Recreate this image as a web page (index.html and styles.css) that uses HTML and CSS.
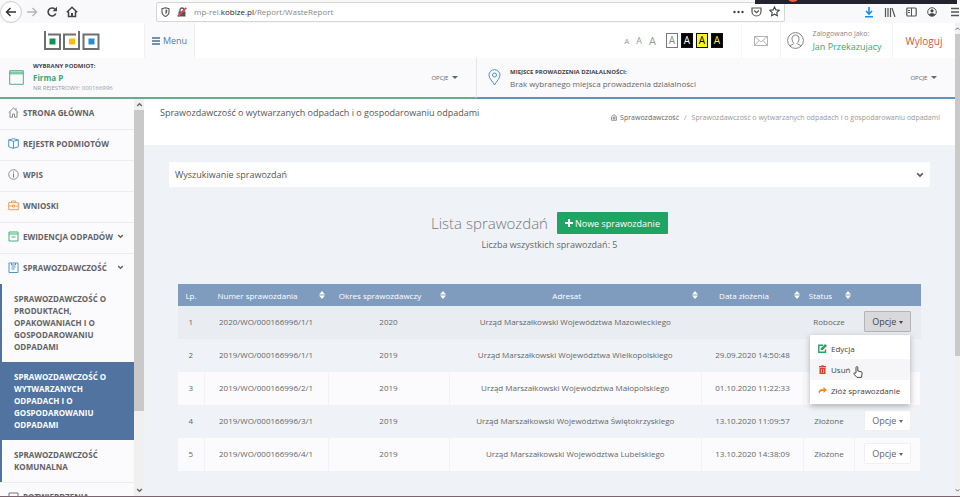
FILE: index.html
```html
<!DOCTYPE html>
<html lang="pl">
<head>
    <meta charset="UTF-8">
    <meta name="viewport" content="width=device-width, initial-scale=1.0">
    <title>Sprawozdawczość</title>
    <link rel="stylesheet" href="styles.css">
</head>
<body>

    <!-- Ikony używane wielokrotnie -->
    <svg class="sprite" aria-hidden="true">
        <symbol id="chevron" viewBox="0 0 8 6"><path d="M1.2 1.2 4 4l2.800-2.800" fill="none" stroke="currentColor" stroke-width="1.600"/></symbol>
        <symbol id="sort" viewBox="0 0 6 8"><path d="M3 0 6 3.400H0zM3 8 0 4.600h6z" fill="currentColor"/></symbol>
    </svg>

    <!-- Pasek przeglądarki -->
    <div class="browser">
        <button class="nav-btn nav-back" aria-label="Wstecz">
            <svg width="12" height="12" viewBox="0 0 12 12"><path d="M11 6H2M5.500 2 1.500 6l4 4" fill="none" stroke="#333" stroke-width="1.500"/></svg>
        </button>
        <button class="nav-btn" aria-label="Dalej">
            <svg width="12" height="12" viewBox="0 0 12 12"><path d="M1 6h9M6.500 2l4 4-4 4" fill="none" stroke="#b5b5b8" stroke-width="1.400"/></svg>
        </button>
        <button class="nav-btn" aria-label="Odśwież">
            <svg width="12" height="12" viewBox="0 0 12 12"><path d="M9.800 7.500A4 4 0 1 1 9 3.200" fill="none" stroke="#444" stroke-width="1.600"/><path d="M11 .8v4.400H6.600z" fill="#444"/></svg>
        </button>
        <button class="nav-btn" aria-label="Strona startowa">
            <svg width="12" height="12" viewBox="0 0 12 12"><path d="M.8 6.200 6 1.300l5.200 4.900M2.500 5.500v5h7v-5" fill="none" stroke="#444" stroke-width="1.500"/><path d="M5 7h2v3.500H5z" fill="#444"/></svg>
        </button>
        <div class="address">
            <svg width="9" height="10" viewBox="0 0 9 10"><path d="M4.500.7 8 1.700v3c0 2.300-1.500 3.800-3.500 4.700C2.500 8.500 1 7 1 4.700v-3z" fill="none" stroke="#555" stroke-width="1.100"/><path d="M4.500 2.500v4.800c1-.6 1.700-1.600 1.700-2.800V3z" fill="#555"/></svg>
            <svg width="10" height="10" viewBox="0 0 10 10"><path d="M3 5V3a2 2 0 0 1 4 0v2" fill="none" stroke="#555" stroke-width="1.300"/><path d="M1.500 4.500h7v5h-7z" fill="#555"/><path d="M.8 9.500 9.200.8" stroke="#e0435a" stroke-width="1.800"/></svg>
            <span class="url">mp-rel.<b>kobize.pl</b>/Report/WasteReport</span>
            <svg width="11" height="4" viewBox="0 0 11 4"><g fill="#444"><circle cx="1.500" cy="2" r="1.200"/><circle cx="5.500" cy="2" r="1.200"/><circle cx="9.500" cy="2" r="1.200"/></g></svg>
            <svg width="11" height="10" viewBox="0 0 11 10"><path d="M1 1h9v3.500a4.500 4.500 0 0 1-9 0zM3.200 3.500l2.300 2.200 2.300-2.200" fill="none" stroke="#555" stroke-width="1.200"/></svg>
            <svg width="11" height="11" viewBox="0 0 11 11"><path d="m5.500.9 1.400 3 3.300.4-2.400 2.200.6 3.300-2.900-1.600-2.900 1.600.6-3.300L.8 4.300l3.300-.4z" fill="none" stroke="#444" stroke-width="1.100"/></svg>
        </div>
        <div class="toolbar">
            <svg width="10" height="12" viewBox="0 0 10 12"><path d="M5 1v7M2 5l3 3 3-3M1 10.800h8" fill="none" stroke="#1a8cf0" stroke-width="1.600"/></svg>
            <svg width="12" height="12" viewBox="0 0 12 12"><path d="M1.500 2v9M4 2v9M6.500 2v9M8 2l3 9" fill="none" stroke="#555" stroke-width="1.200"/></svg>
            <svg width="11" height="12" viewBox="0 0 11 12"><rect x=".8" y="2" width="9.400" height="8" rx="1" fill="none" stroke="#555" stroke-width="1.200"/><path d="M5.500 2v8M2 4.500h2M2 6.500h2" stroke="#555"/></svg>
            <svg width="10" height="12" viewBox="0 0 10 12"><circle cx="5" cy="6" r="4.300" fill="none" stroke="#555"/><circle cx="5" cy="4.800" r="1.600" fill="#444"/><path d="M2 8.500c1-1.800 5-1.800 6 0-1.500 2-4.500 2-6 0z" fill="#444"/></svg>
            <svg class="burger" width="9" height="12" viewBox="0 0 9 12"><path d="M0 2.500h8M0 6h8M0 9.500h8" stroke="#555" stroke-width="1.300"/></svg>
        </div>
        <div class="window-strip"><i></i></div>
    </div>

    <div class="page">
        <div class="app">

            <header class="topbar">
                <a class="logo" href="#" aria-label="BDO">
                    <svg width="58" height="21" viewBox="0 0 58 21">
                        <g fill="none" stroke="#6f6f6f" stroke-width="2">
                            <path d="M2 1v18h15V4.500H5M36 1v18H21V4.500h12M40.500 4.500h15V19h-15z"/>
                        </g>
                        <path d="M6.500 8.500h6v6h-6z" fill="#0e9254"/>
                        <path d="M26 8.500h6v6h-6z" fill="#fbbe08"/>
                        <path d="M45.500 8.500h6v6h-6z" fill="#1d8fd6"/>
                    </svg>
                </a>
                <button class="menu-btn">
                    <svg width="8" height="8" viewBox="0 0 8 8"><path d="M0 1h8M0 4h8M0 7h8" stroke="#4a6f99" stroke-width="1.400"/></svg>
                    Menu
                </button>
                <div class="font-sizes">
                    <button class="fs-s">A</button>
                    <button class="fs-m">A</button>
                    <button class="fs-l">A</button>
                </div>
                <div class="contrast">
                    <button class="c-default">A</button>
                    <button class="c-black">A</button>
                    <button class="c-yellow">A</button>
                    <button class="c-inverse">A</button>
                </div>
                <a class="mail" href="#" aria-label="Wiadomości">
                    <svg width="14" height="10" viewBox="0 0 14 10"><path d="M.5.5h13v9H.5zM.5.5 7 6 13.500.5M.5 9.500 5 4.500M13.500 9.500 9 4.500" fill="none" stroke="#a0a0a0" stroke-width=".8"/></svg>
                </a>
                <div class="user">
                    <svg width="17" height="17" viewBox="0 0 17 17"><g fill="none" stroke="#777" stroke-width=".9"><circle cx="8.500" cy="8.500" r="7.900"/><path d="M3 14c.5-1.500 3.500-1.200 4-2.600C5.500 10 5 8.300 5 6.500c0-4.600 7-4.600 7 0 0 1.800-.5 3.500-2 4.900.5 1.400 3.500 1.100 4 2.600"/></g></svg>
                    <div>
                        <span class="user-label">Zalogowano jako:</span>
                        <a class="user-name" href="#">Jan Przekazujacy</a>
                    </div>
                </div>
                <a class="logout" href="#">Wyloguj</a>
            </header>

            <div class="context">
                <section class="context-box context-company">
                    <svg width="15" height="15" viewBox="0 0 15 15"><path d="M.7.700h13.600v13.600H.7zM.7 3.800h13.600M.7 2.200h13.600" fill="none" stroke="#4cb184"/></svg>
                    <div class="context-text">
                        <span class="context-label">WYBRANY PODMIOT:</span>
                        <strong>Firma P</strong>
                        <small>NR REJESTROWY: 000166996</small>
                    </div>
                    <button class="context-opt">OPCJE <i class="caret"></i></button>
                </section>
                <section class="context-box context-place">
                    <svg width="13" height="17" viewBox="0 0 13 17"><path d="M6.500 16C4.500 12 1 9.500 1 6.200a5.500 5.500 0 0 1 11 0C12 9.500 8.500 12 6.500 16z" fill="none" stroke="#4b93c0"/><circle cx="6.500" cy="6" r="2" fill="none" stroke="#4b93c0"/></svg>
                    <div class="context-text">
                        <span class="context-label">MIEJSCE PROWADZENIA DZIAŁALNOŚCI:</span>
                        <span class="context-value">Brak wybranego miejsca prowadzenia działalności</span>
                    </div>
                    <button class="context-opt">OPCJE <i class="caret"></i></button>
                </section>
            </div>

            <div class="layout">
                <nav class="sidebar">
                    <ul class="nav">
                        <li><a href="#">
                            <svg width="11" height="11" viewBox="0 0 11 11"><path d="M.8 5.500 5.500 1l4.700 4.500M2 4.800v5.400h2.500V7h2v3.200H9V4.800M8 3V1.200" fill="none" stroke="#888"/></svg>
                            STRONA GŁÓWNA</a></li>
                        <li><a href="#">
                            <svg width="11" height="11" viewBox="0 0 11 11"><path d="M5.500 10.300.7 8.800V1.900L5.500.7l4.800 1.200v6.900zM5.500 10.300V3.300M.7 1.900l4.800 1.400 4.800-1.400" fill="none" stroke="#4d97ca"/></svg>
                            REJESTR PODMIOTÓW</a></li>
                        <li><a href="#">
                            <svg width="11" height="11" viewBox="0 0 11 11"><circle cx="5.500" cy="5.500" r="4.800" fill="none" stroke="#888" stroke-width=".9"/><path d="M5.500 2.500v1M5.500 4.500v4" stroke="#777"/></svg>
                            WPIS</a></li>
                        <li><a href="#">
                            <svg width="11" height="11" viewBox="0 0 11 11"><path d="M.7 2.700h9.600v7H.7zM3.500 2.700V1h4v1.700M.7 6h3.800M6.500 6h3.800M4.500 5h2v2h-2z" fill="none" stroke="#eda050"/></svg>
                            WNIOSKI</a></li>
                        <li><a href="#">
                            <svg width="11" height="11" viewBox="0 0 11 11"><path d="M1 1h9v9H1zM1 3h9M3.500 6h4" fill="none" stroke="#3fb37c"/></svg>
                            EWIDENCJA ODPADÓW
                            <svg class="arrow" width="7" height="5"><use href="#chevron"/></svg></a></li>
                        <li><a href="#">
                            <svg width="11" height="11" viewBox="0 0 11 11"><path d="M1 1h9v9.500H1zM3.500 1v2h4V1M3.500 5h4M3.500 7h3" fill="none" stroke="#4d97ca"/></svg>
                            SPRAWOZDAWCZOŚĆ
                            <svg class="arrow" width="7" height="5"><use href="#chevron"/></svg></a>
                            <ul class="subnav">
                                <li><a href="#">SPRAWOZDAWCZOŚĆ O PRODUKTACH, OPAKOWANIACH I O GOSPODAROWANIU ODPADAMI</a></li>
                                <li><a class="active" href="#">SPRAWOZDAWCZOŚĆ O WYTWARZANYCH ODPADACH I O GOSPODAROWANIU ODPADAMI</a></li>
                                <li><a href="#">SPRAWOZDAWCZOŚĆ KOMUNALNA</a></li>
                            </ul>
                        </li>
                        <li><a href="#">
                            <svg width="11" height="11" viewBox="0 0 11 11"><path d="M1 2h9v8H1z" fill="none" stroke="#777"/></svg>
                            POTWIERDZENIA</a></li>
                    </ul>
                </nav>
                <div class="scroll side-scroll">
                    <svg width="7" height="5" class="up"><use href="#chevron"/></svg>
                    <i class="thumb"></i>
                    <svg width="7" height="5"><use href="#chevron"/></svg>
                </div>

                <main class="content">
                    <div class="content-head">
                        <h1>Sprawozdawczość o wytwarzanych odpadach i o gospodarowaniu odpadami</h1>
                        <nav class="crumbs">
                            <svg width="6" height="7" viewBox="0 0 6 7"><path d="M.6 2.500 3 .6l2.400 1.900v3.800H.6zM2.300 3v2h1.600V3z" fill="none" stroke="#777" stroke-width=".8"/></svg>
                            <a href="#">Sprawozdawczość</a>
                            <span class="sep">/</span>
                            <span>Sprawozdawczość o wytwarzanych odpadach i o gospodarowaniu odpadami</span>
                        </nav>
                    </div>

                    <div class="content-body">
                        <button class="search-panel">
                            Wyszukiwanie sprawozdań
                            <svg width="8" height="6"><use href="#chevron"/></svg>
                        </button>

                        <div class="list-head">
                            <h2>Lista sprawozdań</h2>
                            <button class="btn-new">
                                <svg width="8" height="8" viewBox="0 0 8 8"><path d="M4 0v8M0 4h8" stroke="#fff" stroke-width="2"/></svg>
                                Nowe sprawozdanie
                            </button>
                        </div>
                        <p class="list-count">Liczba wszystkich sprawozdań: 5</p>

                        <div class="table-wrap">
                            <table>
                                <colgroup>
                                    <col class="col-lp"><col class="col-num"><col class="col-okres"><col><col class="col-data"><col class="col-status"><col class="col-opt">
                                </colgroup>
                                <thead>
                                    <tr>
                                        <th>Lp.</th>
                                        <th class="sortable"><div>Numer sprawozdania<svg width="6" height="8"><use href="#sort"/></svg></div></th>
                                        <th class="sortable"><div>Okres sprawozdawczy<svg width="6" height="8"><use href="#sort"/></svg></div></th>
                                        <th class="sortable"><div>Adresat<svg width="6" height="8"><use href="#sort"/></svg></div></th>
                                        <th class="sortable"><div>Data złożenia<svg width="6" height="8"><use href="#sort"/></svg></div></th>
                                        <th class="sortable"><div>Status<svg width="6" height="8"><use href="#sort"/></svg></div></th>
                                        <th></th>
                                    </tr>
                                </thead>
                                <tbody>
                                    <tr class="current">
                                        <td>1</td>
                                        <td>2020/WO/000166996/1/1</td>
                                        <td>2020</td>
                                        <td>Urząd Marszałkowski Województwa Mazowieckiego</td>
                                        <td></td>
                                        <td>Robocze</td>
                                        <td>
                                            <div class="dropdown">
                                                <button class="btn-opt open">Opcje <i class="caret"></i></button>
                                                <div class="dropdown-menu">
                                                    <a href="#">
                                                        <svg width="9" height="9" viewBox="0 0 9 9"><path d="M5 1.200H.8v7h6.700V5.500" fill="none" stroke="#1fa463" stroke-width="1.400"/><path d="M7.200 0 9 1.800 4.800 6 2.700 6.300 3 4.200z" fill="#1fa463"/></svg>
                                                        Edycja</a>
                                                    <a class="hover" href="#">
                                                        <svg width="9" height="9" viewBox="0 0 9 9"><path d="M1 1h2.300V.2h2.400V1H8v1.200H1zM1.500 2.800h6V9h-6z" fill="#d2452f"/><path d="M3.500 4v4M5.500 4v4" stroke="#f1c0b8" stroke-width=".7"/></svg>
                                                        Usuń</a>
                                                    <a href="#">
                                                        <svg width="9" height="9" viewBox="0 0 9 9"><path d="M5.500 1 9 4 5.500 7V5C3 4.800 1.500 5.500 1.200 8.200-.5 5 1.500 3 5.500 3z" fill="#f08a1c"/></svg>
                                                        Złóż sprawozdanie</a>
                                                </div>
                                                <svg class="cursor" width="10" height="12" viewBox="0 0 10 12"><path d="M3 7V1.500a.9.900 0 0 1 1.800 0V5l3.300.7c.8.200 1.100.7 1 1.500l-.6 4.200H4L1 8.200c-.6-.9.400-1.600 1-1z" fill="#fff" stroke="#333" stroke-width=".9"/></svg>
                                            </div>
                                        </td>
                                    </tr>
                                    <tr>
                                        <td>2</td>
                                        <td>2019/WO/000166996/1/1</td>
                                        <td>2019</td>
                                        <td>Urząd Marszałkowski Województwa Wielkopolskiego</td>
                                        <td>29.09.2020 14:50:48</td>
                                        <td></td>
                                        <td></td>
                                    </tr>
                                    <tr>
                                        <td>3</td>
                                        <td>2019/WO/000166996/2/1</td>
                                        <td>2019</td>
                                        <td>Urząd Marszałkowski Województwa Małopolskiego</td>
                                        <td>01.10.2020 11:22:33</td>
                                        <td></td>
                                        <td></td>
                                    </tr>
                                    <tr>
                                        <td>4</td>
                                        <td>2019/WO/000166996/3/1</td>
                                        <td>2019</td>
                                        <td>Urząd Marszałkowski Województwa Świętokrzyskiego</td>
                                        <td>13.10.2020 11:09:57</td>
                                        <td>Złożone</td>
                                        <td><button class="btn-opt">Opcje <i class="caret"></i></button></td>
                                    </tr>
                                    <tr>
                                        <td>5</td>
                                        <td>2019/WO/000166996/4/1</td>
                                        <td>2019</td>
                                        <td>Urząd Marszałkowski Województwa Lubelskiego</td>
                                        <td>13.10.2020 14:38:09</td>
                                        <td>Złożone</td>
                                        <td><button class="btn-opt">Opcje <i class="caret"></i></button></td>
                                    </tr>
                                </tbody>
                            </table>
                        </div>
                    </div>
                </main>
            </div>
        </div>
        <div class="scroll page-scroll">
            <svg width="5" height="5" class="up"><use href="#chevron"/></svg>
            <i class="thumb"></i>
            <svg width="5" height="5"><use href="#chevron"/></svg>
        </div>
    </div>

</body>
</html>
```

FILE: styles.css
```css
* {
    margin: 0;
    padding: 0;
    box-sizing: border-box;
}

body {
    font-family: "Open Sans", sans-serif;
    font-size: 9px;
    color: #666;
    height: 100vh;
    display: flex;
    flex-direction: column;
    overflow: hidden;
    background-color: #fff;
    border-bottom: 1px solid #7b6470;
}

button {
    font: inherit;
    color: inherit;
    background: none;
    border: 0;
}

a {
    color: inherit;
    text-decoration: none;
}

ul {
    list-style: none;
}

svg {
    flex: none;
}

.sprite {
    position: absolute;
    width: 0;
    height: 0;
}

.caret {
    display: inline-block;
    border: 3px solid transparent;
    border-top-color: currentColor;
    border-bottom: 0;
    vertical-align: middle;
}

/* Pasek przeglądarki */
.browser {
    position: relative;
    display: flex;
    align-items: center;
    height: 23px;
    flex: none;
    background-color: #f9f9fb;
}

.nav-btn {
    width: 20px;
    height: 22px;
    display: flex;
    align-items: center;
    justify-content: center;
}

.nav-back {
    width: 22px;
    border: 1px solid #ccc;
    border-radius: 50%;
    background-color: #fff;
}

.address {
    flex: 1;
    display: flex;
    align-items: center;
    gap: 7px;
    height: 20px;
    margin-left: 74px;
    padding: 0 4px;
    background-color: #fff;
    border: 1px solid #d5d5d8;
    border-radius: 2px;
}

.url {
    flex: 1;
    font-size: 8px;
    color: #888;
}

.url b {
    font-weight: 400;
    color: #222;
}

.toolbar {
    display: flex;
    align-items: center;
    gap: 10px;
    margin-left: 79px;
}

.burger {
    margin-left: 4px;
}

.window-strip {
    position: absolute;
    top: 0;
    right: 3px;
    width: 202px;
    height: 4px;
    overflow: hidden;
    background-color: #23232f;
}

.window-strip i {
    display: block;
    width: 12px;
    height: 12px;
    margin: -10px 0 0 32px;
    border-radius: 50%;
    background-color: #f0603a;
}

/* Układ strony */
.page {
    flex: 1;
    display: flex;
    min-height: 0;
}

.app {
    flex: 1;
    display: flex;
    flex-direction: column;
    min-width: 0;
}

.scroll {
    display: flex;
    flex-direction: column;
    align-items: center;
    flex: none;
    padding: 3px 0;
    background-color: #f0f0f1;
    color: #666;
}

.scroll .up {
    transform: rotate(180deg);
}

.scroll .thumb {
    width: 100%;
    margin: 3px 0 auto;
    background-color: #c9c9ca;
}

.side-scroll {
    width: 10px;
}

.side-scroll .thumb {
    height: 77%;
}

.page-scroll {
    width: 5px;
}

.page-scroll .thumb {
    height: 69%;
}

/* Górna belka */
.topbar {
    display: flex;
    height: 35px;
    flex: none;
    background-color: #fff;
}

.topbar > * {
    display: flex;
    align-items: center;
    justify-content: center;
}

.logo {
    width: 144px;
}

.menu-btn {
    width: 51px;
    gap: 3px;
    font-size: 9px;
    color: #587a9f;
    background-color: #fafafd;
    border-left: 1px solid #f0f0f3;
    border-right: 1px solid #f0f0f3;
}

.font-sizes {
    gap: 7px;
    margin-left: auto;
    color: #999;
}

.fs-s {
    font-size: 8px;
}

.fs-m {
    font-size: 9px;
}

.fs-l {
    font-size: 11px;
}

.contrast {
    gap: 3px;
    padding: 0 18px 0 10px;
}

.contrast button {
    width: 12px;
    height: 15px;
    font-size: 10px;
    line-height: 13px;
    border: 1px solid #111;
}

.contrast .c-default {
    color: #888;
    border-color: #777;
}

.c-black {
    color: #fff;
    background-color: #000;
}

.c-yellow {
    color: #000;
    background-color: #fdf41b;
}

.c-inverse {
    color: #fdf41b;
    background-color: #000;
}

.mail {
    width: 39px;
    border-left: 1px solid #f5f5f7;
}

.user {
    width: 113px;
    gap: 8px;
    padding-right: 4px;
    border-left: 1px solid #f2f2f4;
    border-right: 1px solid #f2f2f4;
}

.user-label {
    display: block;
    font-size: 7px;
    line-height: 12px;
    color: #888;
}

.user-name {
    display: block;
    font-size: 9px;
    line-height: 13px;
    color: #3aa670;
}

.logout {
    width: 62px;
    font-size: 10px;
    color: #c95a45;
}

/* Wybrany podmiot i miejsce */
.context {
    display: flex;
    height: 41px;
    flex: none;
    background-color: #fafafc;
}

.context-box {
    flex: 1;
    display: flex;
    align-items: center;
    gap: 9px;
    border-bottom: 2px solid #62ae8e;
}

.context-company {
    padding: 0 18px 0 9px;
}

.context-place {
    padding: 0 18px 0 11px;
    border-left: 1px solid #e6e6ea;
    border-bottom-color: #5a96bd;
}

.context-text {
    flex: 1;
}

.context-text > * {
    display: block;
    line-height: 11px;
}

.context-label {
    font-size: 6px;
    font-weight: 700;
    color: #444;
}

.context-text strong {
    font-size: 8px;
    color: #3aa670;
}

.context-text small {
    font-size: 6px;
    color: #999;
}

.context-value {
    font-size: 8px;
}

.context-opt {
    font-size: 6px;
}

.context-opt .caret {
    margin-left: 2px;
}

/* Menu boczne */
.layout {
    flex: 1;
    display: flex;
    min-height: 0;
}

.sidebar {
    width: 134px;
    flex: none;
    overflow: hidden;
    background-color: #fbfbfd;
    font-size: 8px;
    font-weight: 700;
    color: #626266;
}

.nav > li {
    border-bottom: 1px solid #ececef;
}

.nav > li > a {
    display: flex;
    align-items: center;
    gap: 4px;
    height: 30px;
    padding: 0 10px 3px 8px;
    white-space: nowrap;
}

.arrow {
    margin-left: auto;
}

.subnav {
    border-left: 2px solid #50739f;
}

.subnav a {
    display: block;
    padding: 9px 20px 9px 12px;
    line-height: 12px;
}

.subnav .active {
    color: #fff;
    background-color: #50739f;
}

/* Treść */
.content {
    flex: 1;
    min-width: 0;
    background-color: #eff3f7;
}

.content-head {
    display: flex;
    justify-content: space-between;
    height: 46px;
    padding: 6px 15px 0 16px;
    background-color: #fff;
}

.content-head h1 {
    font-size: 9px;
    font-weight: 400;
    line-height: 15px;
    color: #555;
}

.crumbs {
    display: flex;
    align-items: center;
    gap: 3px;
    height: 24px;
    font-size: 7px;
    color: #999;
}

.crumbs a {
    color: #666;
}

.sep {
    margin: 0 2px;
}

.content-body {
    padding: 17px 25px 0;
}

.search-panel {
    display: flex;
    align-items: center;
    justify-content: space-between;
    width: 100%;
    height: 25px;
    padding: 0 6px;
    color: #555;
    background-color: #fff;
}

.list-head {
    display: flex;
    align-items: center;
    justify-content: center;
    gap: 9px;
    margin-top: 25px;
}

.list-head h2 {
    font-size: 15px;
    font-weight: 300;
    line-height: 22px;
    color: #777;
}

.btn-new {
    display: flex;
    align-items: center;
    justify-content: center;
    gap: 2px;
    height: 22px;
    padding: 0 8px;
    color: #fff;
    background-color: #1fa463;
    border-radius: 1px;
}

.list-count {
    margin-top: 4px;
    line-height: 14px;
    text-align: center;
}

/* Tabela sprawozdań */
.table-wrap {
    margin-top: 32px;
    padding: 0 9px;
}

table {
    width: 100%;
    table-layout: fixed;
    border-collapse: collapse;
    font-size: 8px;
    text-align: center;
}

.col-lp {
    width: 26px;
}

.col-num {
    width: 124px;
}

.col-okres {
    width: 121px;
}

.col-data {
    width: 102px;
}

.col-status {
    width: 51px;
}

.col-opt {
    width: 66px;
}

th {
    height: 22px;
    font-weight: 400;
    color: #fff;
    background-color: #7f9cbf;
}

.sortable div {
    display: flex;
    align-items: center;
    justify-content: space-between;
    padding-right: 3px;
}

.sortable div::before {
    content: "";
}

.sortable svg {
    margin-left: 8px;
}

td {
    height: 33px;
    padding-bottom: 2px;
    border-right: 1px solid #f0f2f5;
}

tbody tr:nth-child(odd) {
    background-color: #fbfbfd;
}

tbody .current:nth-child(odd) {
    background-color: #e9edf2;
}

.current td {
    border-color: transparent;
}

.btn-opt {
    width: 47px;
    height: 21px;
    font-size: 9px;
    background-color: #fff;
    border: 1px solid #f0f0f2;
    border-radius: 1px;
}

.btn-opt .caret {
    border-width: 3px 2px 0;
}

.btn-opt.open {
    color: #444;
    background-color: #d9d9dc;
    border-color: #b5b5b8;
}

.dropdown {
    position: relative;
    display: inline-block;
}

.dropdown-menu {
    position: absolute;
    top: 100%;
    right: 1px;
    z-index: 1;
    min-width: 100px;
    margin-top: 3px;
    padding: 3px 0;
    background-color: #fff;
    box-shadow: 0 2px 6px rgba(0, 0, 0, 0.3);
}

.dropdown-menu a {
    display: flex;
    align-items: center;
    gap: 4px;
    height: 21px;
    padding: 0 8px;
    white-space: nowrap;
    color: #444;
}

.dropdown-menu .hover {
    background-color: #f6f6f8;
}

.cursor {
    position: absolute;
    z-index: 2;
    top: 55px;
    left: -11px;
}
```
